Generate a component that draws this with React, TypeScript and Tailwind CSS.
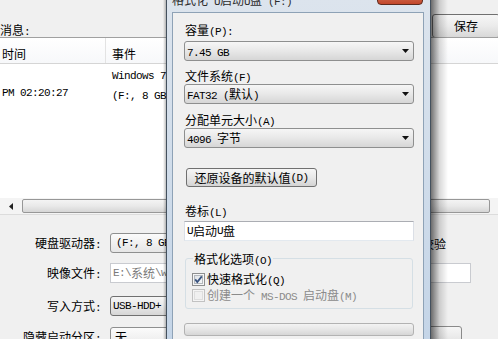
import React from "react";

const CJK = /([\u2E80-\u9FFF\u3000-\u303F\uFF00-\uFFEF]+)/;

function T({ s }: { s: string }) {
  return (
    <>
      {s
        .split(CJK)
        .filter((p) => p.length > 0)
        .map((p, i) =>
          CJK.test(p) ? (
            <span key={i} className="font-['Noto_Sans_CJK_SC',sans-serif] text-[12px]">
              {p}
            </span>
          ) : (
            <span key={i} className="font-['Liberation_Mono',monospace] text-[11px] tracking-[-0.6px] whitespace-pre">
              {p}
            </span>
          )
        )}
    </>
  );
}

function Arrow() {
  return (
    <svg width="7" height="4" viewBox="0 0 7 4" className="shrink-0">
      <path d="M0 0H7L3.5 4Z" fill="#111" />
    </svg>
  );
}

function Combo({ s }: { s: string }) {
  return (
    <div className="h-[20px] rounded-[3px] border border-[#8e8f8f] bg-linear-to-b from-[#f6f6f6] via-[#e8e8e8] to-[#d6d6d6] flex items-center pl-[2px] pr-[4px]">
      <div className="flex-1 whitespace-pre">
        <T s={s} />
      </div>
      <Arrow />
    </div>
  );
}

function CheckOn() {
  return (
    <svg width="13" height="13" viewBox="0 0 13 13" className="shrink-0">
      <defs>
        <linearGradient id="cbg" x1="0" y1="0" x2="1" y2="1">
          <stop offset="0" stopColor="#dfe2e6" />
          <stop offset="1" stopColor="#f7f8f9" />
        </linearGradient>
      </defs>
      <rect x="0.5" y="0.5" width="12" height="12" fill="#f6f6f6" stroke="#8e8f8f" />
      <rect x="2.5" y="2.5" width="8" height="8" fill="url(#cbg)" stroke="#b4b8bd" />
      <path d="M3.2 6.4L5.3 9L9.8 3.4" stroke="#3a5480" strokeWidth="1.8" fill="none" />
    </svg>
  );
}

function CheckOff({ disabled }: { disabled?: boolean }) {
  return (
    <svg width="13" height="13" viewBox="0 0 13 13" className="shrink-0">
      <rect x="0.5" y="0.5" width="12" height="12" fill="#f4f4f4" stroke={disabled ? "#c2c2c2" : "#8e8f8f"} />
      <rect x="2.5" y="2.5" width="8" height="8" fill="#f0f0f0" stroke={disabled ? "#dedede" : "#b4b8bd"} />
    </svg>
  );
}

export default function App() {
  return (
    <div className="relative w-[498px] h-[339px] overflow-hidden bg-[#f0f0f0] text-black leading-[14px]">
      {/* background window */}
      <div className="flex flex-col w-[498px]">
        <div className="h-[37px] flex items-end justify-between">
          <div className="mb-[1px] h-[14px] whitespace-pre">
            <T s="消息:" />
          </div>
          <div className="w-[68px] h-[24px] -mr-[2px] -mb-[1px] rounded-[3px] border border-[#707070] bg-linear-to-b from-[#f6f6f6] via-[#ebebeb] to-[#d8d8d8] flex items-center justify-center">
            <T s="保存" />
          </div>
        </div>

        <div className="h-[161px] bg-white border-t border-[#a0a0a0] flex flex-col">
          <div className="h-[26px] border-b border-[#d5d5d5] flex bg-linear-to-b from-white to-[#f7f8fa]">
            <div className="w-[106px] border-r border-[#e3e3e3] pl-[2px] pt-[8px]">
              <T s="时间" />
            </div>
            <div className="pl-[6px] pt-[8px]">
              <T s="事件" />
            </div>
          </div>
          <div className="flex leading-[17px] pt-[1px]">
            <div className="w-[106px] pl-[2px]">
              <div className="h-[17px]" />
              <div className="whitespace-pre">
                <T s="PM 02:20:27" />
              </div>
            </div>
            <div className="pl-[6px]">
              <div className="whitespace-pre">
                <T s="Windows 7" />
              </div>
              <div className="whitespace-pre">
                <T s="(F:, 8 GB)" />
              </div>
            </div>
          </div>
        </div>

        <div className="h-[16px] flex bg-[#f4f4f4]">
          <div className="w-[22px] flex items-center justify-center">
            <svg width="4" height="7" viewBox="0 0 4 7">
              <path d="M4 0V7L0 3.5Z" fill="#222" />
            </svg>
          </div>
          <div className="w-[468px] my-[1px] rounded-[2px] border border-[#979797] bg-linear-to-b from-[#f4f4f4] via-[#e9e9e9] to-[#d6d6d6]" />
        </div>
        <div className="h-[1px] bg-[#dcdcdc]" />

        {/* form rows */}
        <div className="mt-[18px] h-[20px] flex items-center">
          <div className="w-[101px] text-right whitespace-pre">
            <T s="硬盘驱动器:" />
          </div>
          <div className="ml-[9px] w-[260px] h-[20px] rounded-[3px] border border-[#8e8f8f] bg-linear-to-b from-[#fbfbfb] to-[#e6e6e6] flex items-center pl-[5px] whitespace-pre">
            <T s="(F:, 8 GB)" />
          </div>
          <div className="ml-auto mr-[52px] flex items-center whitespace-pre">
            <CheckOff />
            <span className="ml-[3px]">
              <T s="写入后校验" />
            </span>
          </div>
        </div>

        <div className="mt-[10px] h-[20px] flex items-center">
          <div className="w-[101px] text-right whitespace-pre">
            <T s="映像文件:" />
          </div>
          <div className="ml-[9px] w-[361px] h-[20px] border border-[#c9cbd0] bg-white flex items-center pl-[2px] text-[#7a7a7a] whitespace-pre">
            <T s="E:\系统\win7.iso" />
          </div>
        </div>

        <div className="mt-[13px] h-[20px] flex items-center">
          <div className="w-[101px] text-right whitespace-pre">
            <T s="写入方式:" />
          </div>
          <div className="ml-[9px] w-[180px] h-[20px] rounded-[3px] border border-[#707070] bg-linear-to-b from-[#f6f6f6] via-[#e8e8e8] to-[#d6d6d6] flex items-center pl-[2px] whitespace-pre">
            <T s="USB-HDD+" />
          </div>
        </div>

        <div className="mt-[11px] h-[20px] flex items-center">
          <div className="w-[101px] text-right whitespace-pre">
            <T s="隐藏启动分区:" />
          </div>
          <div className="ml-[9px] w-[180px] h-[20px] rounded-[3px] border border-[#8e8f8f] bg-linear-to-b from-[#fbfbfb] to-[#e9e9e9] flex items-center pl-[4px] whitespace-pre">
            <T s="无" />
          </div>
          <div className="ml-auto mr-[36px] w-[80px] h-[22px] rounded-[3px] border border-[#8a8a8a] bg-linear-to-b from-[#f6f6f6] to-[#dedede]" />
        </div>
      </div>

      {/* dialog shadow */}
      <div className="absolute left-[431px] top-0 w-[17px] h-[339px] bg-linear-to-r from-black/55 via-black/15 to-transparent" />
      <div className="absolute left-[163px] top-0 w-[3px] h-[339px] bg-linear-to-l from-black/25 to-transparent" />

      {/* format dialog */}
      <div className="absolute left-[166px] top-0 w-[265px] h-[360px] border-x border-[#44515e] bg-linear-to-b from-[#dce4ed] to-[#c3d4e7] pt-[12px] pl-[5px] pr-[6px]">
        <div className="absolute left-[5px] top-[-8px] whitespace-pre text-[#2d2d2d]">
          <T s="格式化 U启动U盘 (F:)" />
        </div>
        <div className="absolute left-[210px] top-[-14px] w-[46px] h-[19px] rounded-b-[4px] border border-[#5e2a1e] bg-linear-to-b from-[#e3a58f] via-[#cf6a4e] to-[#c2472b]" />

        <div className="h-full border border-[#8ea2b6] bg-[#f0f0f0] pl-[11px] pr-[9px] flex flex-col">
          <div className="mt-[9px] h-[14px] pl-[1px] whitespace-pre">
            <T s="容量(P):" />
          </div>
          <div className="mt-[5px]">
            <Combo s="7.45 GB" />
          </div>
          <div className="mt-[7px] h-[14px] pl-[1px] whitespace-pre">
            <T s="文件系统(F)" />
          </div>
          <div className="mt-[2px]">
            <Combo s="FAT32 (默认)" />
          </div>
          <div className="mt-[8px] h-[14px] pl-[1px] whitespace-pre">
            <T s="分配单元大小(A)" />
          </div>
          <div className="mt-[2px]">
            <Combo s="4096 字节" />
          </div>
          <div className="mt-[20px] ml-[2px] w-[131px] h-[19px] rounded-[3px] border border-[#707070] bg-linear-to-b from-[#f6f6f6] via-[#e8e8e8] to-[#d4d4d4] flex items-center justify-center whitespace-pre">
            <T s="还原设备的默认值(D)" />
          </div>
          <div className="mt-[16px] h-[14px] pl-[1px] whitespace-pre">
            <T s="卷标(L)" />
          </div>
          <div className="mt-[4px] h-[20px] border border-[#abadb3] border-l-[#dbdfe6] border-r-[#dbdfe6] border-b-[#e3e9ef] bg-white flex items-center pl-[2px] whitespace-pre">
            <T s="U启动U盘" />
          </div>
          <fieldset className="mt-[10px] mx-[1px] border border-[#d5dfe5] rounded-[3px] pl-[6px] pb-[5px]">
            <legend className="ml-[1px] px-[1px] h-[14px] whitespace-pre">
              <T s="格式化选项(O)" />
            </legend>
            <div className="mt-[6px] h-[16px] flex items-center whitespace-pre">
              <CheckOn />
              <span className="ml-[2px]">
                <T s="快速格式化(Q)" />
              </span>
            </div>
            <div className="h-[16px] flex items-center whitespace-pre text-[#8b8b8b]">
              <CheckOff disabled />
              <span className="ml-[2px]">
                <T s="创建一个 MS-DOS 启动盘(M)" />
              </span>
            </div>
          </fieldset>
          <div className="mt-[14px] h-[13px] rounded-[3px] border border-[#b2b2b2] bg-linear-to-b from-[#f3f3f3] via-[#e6e6e6] to-[#d6d6d6]" />
        </div>
      </div>
    </div>
  );
}
